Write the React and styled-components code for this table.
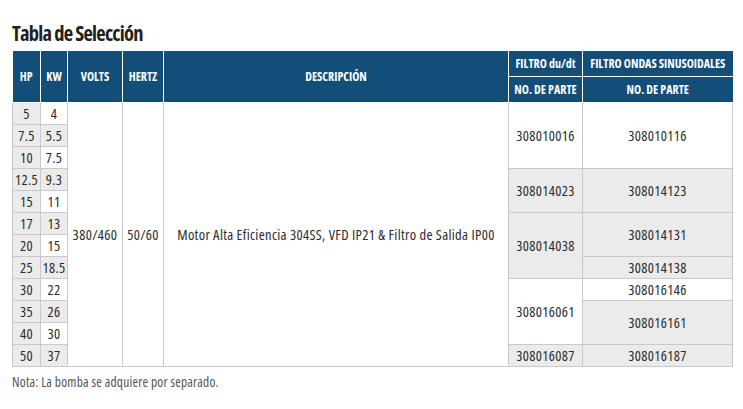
import React from 'react';
import styled, { createGlobalStyle } from 'styled-components';

const GlobalStyle = createGlobalStyle`
  html, body {
    margin: 0;
    padding: 0;
    background: #ffffff;
  }
  body {
    font-family: "Open Sans", "Liberation Sans", sans-serif;
    font-stretch: 75%;
    color: #2b2b2b;
  }
`;

const BLUE = '#134e79';
const GREY = '#ebebeb';
const LINE = '#c9c9c9';

const Page = styled.div`
  width: 743px;
  padding: 20px 12px 0;
  box-sizing: border-box;
`;

const Title = styled.h2`
  margin: 0 0 4px;
  font-size: 20.5px;
  line-height: 27px;
  font-weight: 700;
  color: #231f20;
  letter-spacing: -0.75px;
`;

const Table = styled.table`
  width: 720px;
  border-collapse: collapse;
  table-layout: fixed;
`;

const Th = styled.th`
  background: ${BLUE};
  color: #fff;
  font-size: 12px;
  font-weight: 700;
  text-align: center;
  padding: 0;
  height: 25px;
  border: 1px solid #fff;
  border-top: none;
  white-space: nowrap;
  &:first-child { border-left: none; }
  &:last-child { border-right: none; }
`;

const Td = styled.td`
  background: ${(p) => (p.$grey ? GREY : '#fff')};
  border: 1px solid ${LINE};
  font-size: 14.5px;
  letter-spacing: 0.35px;
  text-align: center;
  padding: 0;
  height: 21px;
  white-space: nowrap;
  vertical-align: middle;
`;

const Note = styled.p`
  margin: 6px 0 0;
  font-size: 13.5px;
  letter-spacing: 0.2px;
  color: #555;
`;

const rows = [
  ['5', '4'], ['7.5', '5.5'], ['10', '7.5'], ['12.5', '9.3'], ['15', '11'], ['17', '13'],
  ['20', '15'], ['25', '18.5'], ['30', '22'], ['35', '26'], ['40', '30'], ['50', '37'],
];

// celdas con rowspan por índice de fila inicial
const dudt = {
  0: { v: '308010016', span: 3 },
  3: { v: '308014023', span: 2, grey: true },
  5: { v: '308014038', span: 3, grey: true },
  8: { v: '308016061', span: 3 },
  11: { v: '308016087', span: 1, grey: true },
};

const sinus = {
  0: { v: '308010116', span: 3 },
  3: { v: '308014123', span: 2, grey: true },
  5: { v: '308014131', span: 2, grey: true },
  7: { v: '308014138', span: 1, grey: true },
  8: { v: '308016146', span: 1 },
  9: { v: '308016161', span: 2, grey: true },
  11: { v: '308016187', span: 1, grey: true },
};

const App = () => (
  <Page>
    <GlobalStyle />
    <Title>Tabla de Selección</Title>
    <Table>
      <colgroup>
        <col style={{ width: 28 }} />
        <col style={{ width: 27 }} />
        <col style={{ width: 55 }} />
        <col style={{ width: 41 }} />
        <col style={{ width: 345 }} />
        <col style={{ width: 74 }} />
        <col style={{ width: 150 }} />
      </colgroup>
      <thead>
        <tr>
          <Th rowSpan={2}>HP</Th>
          <Th rowSpan={2}>KW</Th>
          <Th rowSpan={2}>VOLTS</Th>
          <Th rowSpan={2}>HERTZ</Th>
          <Th rowSpan={2}>DESCRIPCIÓN</Th>
          <Th>FILTRO du/dt</Th>
          <Th>FILTRO ONDAS SINUSOIDALES</Th>
        </tr>
        <tr>
          <Th>NO. DE PARTE</Th>
          <Th>NO. DE PARTE</Th>
        </tr>
      </thead>
      <tbody>
        {rows.map(([hp, kw], i) => (
          <tr key={hp}>
            <Td $grey>{hp}</Td>
            <Td $grey={i % 2 === 1}>{kw}</Td>
            {i === 0 && (
              <>
                <Td rowSpan={12}>380/460</Td>
                <Td rowSpan={12}>50/60</Td>
                <Td rowSpan={12}>Motor Alta Eficiencia 304SS, VFD IP21 &amp; Filtro de Salida IP00</Td>
              </>
            )}
            {dudt[i] && <Td rowSpan={dudt[i].span} $grey={dudt[i].grey}>{dudt[i].v}</Td>}
            {sinus[i] && <Td rowSpan={sinus[i].span} $grey={sinus[i].grey}>{sinus[i].v}</Td>}
          </tr>
        ))}
      </tbody>
    </Table>
    <Note>Nota: La bomba se adquiere por separado.</Note>
  </Page>
);

export default App;
